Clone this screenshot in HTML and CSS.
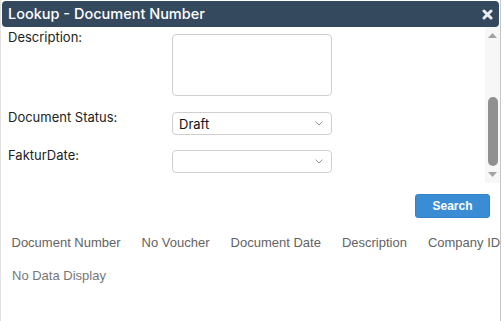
FILE: index.html
```html
<!DOCTYPE html>
<html>
<head>
<meta charset="utf-8">
<link rel="stylesheet" href="styles.css">
</head>
<body>
<div class="dialog">
  <div class="titlebar">
    <span class="title">Lookup - Document Number</span>
    <svg class="close" width="11" height="11" viewBox="0 0 11 11"><path d="M2 2 L9 9 M9 2 L2 9" stroke="#e9ecef" stroke-width="3" stroke-linecap="round"/></svg>
  </div>
  <div class="scrollarea">
    <div class="form">
      <div class="row row-first">
        <div class="label label-top">Description:</div>
        <div class="textarea"></div>
      </div>
      <div class="row row-select1">
        <div class="label">Document Status:</div>
        <div class="select"><span class="value">Draft</span><svg width="8" height="5" viewBox="0 0 8 5"><path d="M0.5 0.5 L4 4 L7.5 0.5" fill="none" stroke="#9a9a9a" stroke-width="1"/></svg></div>
      </div>
      <div class="row row-select2">
        <div class="label">FakturDate:</div>
        <div class="select"><span class="value"></span><svg width="8" height="5" viewBox="0 0 8 5"><path d="M0.5 0.5 L4 4 L7.5 0.5" fill="none" stroke="#9a9a9a" stroke-width="1"/></svg></div>
      </div>
    </div>
    <div class="scrollbar">
      <svg class="arrow-up" width="9" height="5" viewBox="0 0 9 5"><polygon points="4.5,0 9,5 0,5" fill="#a3a3a3"/></svg>
      <div class="thumb"></div>
      <svg class="arrow-down" width="9" height="5" viewBox="0 0 9 5"><polygon points="0,0 9,0 4.5,5" fill="#a3a3a3"/></svg>
    </div>
  </div>
  <div class="actions">
    <button class="search">Search</button>
  </div>
  <table class="grid">
    <thead>
      <tr>
        <th>Document Number</th>
        <th>No Voucher</th>
        <th>Document Date</th>
        <th>Description</th>
        <th>Company ID</th>
      </tr>
    </thead>
  </table>
  <div class="nodata">No Data Display</div>
</div>
</body>
</html>
```
FILE: styles.css
```css
html, body {
  margin: 0;
  padding: 0;
  background: #ffffff;
}
body {
  width: 504px;
  height: 321px;
  overflow: hidden;
}
.dialog {
  width: 499px;
  height: 321px;
  border-left: 1px solid #e2e2e2;
  border-right: 1px solid #c4c4c4;
  overflow: hidden;
  background: #fff;
  box-sizing: content-box;
}
.titlebar {
  margin: 1px 1px 0 1px;
  height: 26px;
  background: #34495e;
  border-radius: 4px;
  display: flex;
  align-items: center;
  justify-content: space-between;
  padding: 0 6px 0 6px;
}
.title {
  font-family: Inter, "Noto Sans", sans-serif;
  font-size: 14.5px;
  color: #ffffff;
  line-height: 26px;
  font-weight: 500;
}
.close {
  display: block;
}
.scrollarea {
  display: flex;
  height: 156px;
  overflow: hidden;
}
.form {
  flex: 1;
  padding: 7px 0 0 7px;
  font-family: Inter, "Noto Sans", sans-serif;
  font-size: 13px;
  color: #222;
}
.row {
  display: flex;
  align-items: flex-start;
}
.row-select1 {
  margin-top: 16px;
}
.row-select2 {
  margin-top: 15px;
}
.label {
  width: 164px;
  line-height: 16px;
  margin-top: -3px;
}
.label-top {
  margin-top: -5px;
}
.textarea {
  width: 160px;
  height: 62px;
  box-sizing: border-box;
  border: 1px solid #cfcfcf;
  border-radius: 4px;
}
.select {
  width: 160px;
  height: 23px;
  box-sizing: border-box;
  border: 1px solid #cfcfcf;
  border-radius: 4px;
  display: flex;
  align-items: center;
  justify-content: space-between;
  padding: 0 8px 0 6px;
}
.select svg {
  display: block;
}
.value {
  font-size: 13px;
  color: #111;
}
.scrollbar {
  width: 15px;
  background: #f7f7f7;
  display: flex;
  flex-direction: column;
  align-items: center;
  padding-top: 6px;
  box-sizing: border-box;
}
.scrollbar svg {
  display: block;
}
.thumb {
  width: 10px;
  height: 69px;
  margin-top: 59px;
  background: #909090;
  border-radius: 5px;
}
.arrow-down {
  margin-top: 6px;
}
.actions {
  display: flex;
  justify-content: flex-end;
  padding: 11px 10px 0 0;
}
.search {
  width: 75px;
  height: 24px;
  background: #3a8dd5;
  border: 1px solid #3483c9;
  border-radius: 3px;
  color: #fff;
  font-family: "Liberation Sans", Arial, sans-serif;
  font-weight: bold;
  font-size: 12px;
  padding: 0;
}
.grid {
  border-collapse: collapse;
  margin: 9px 0 0 0;
  font-family: "Liberation Sans", Arial, sans-serif;
  font-size: 13px;
  color: #636363;
  white-space: nowrap;
}
.grid th {
  font-weight: normal;
  text-align: left;
  padding: 8px 10.5px;
  line-height: 16px;
}
.nodata {
  font-family: "Liberation Sans", Arial, sans-serif;
  font-size: 13px;
  color: #777;
  line-height: 16px;
  padding: 9px 11px;
}
```
